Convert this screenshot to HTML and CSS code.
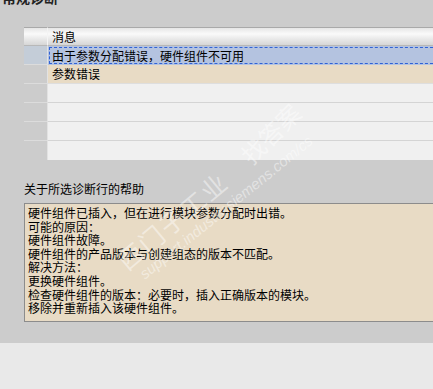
FILE: index.html
```html
<!DOCTYPE html>
<html lang="zh-CN">
<head>
    <meta charset="UTF-8">
    <meta name="viewport" content="width=device-width, initial-scale=1.0">
    <title>常规诊断</title>
    <link rel="stylesheet" href="styles.css">
</head>
<body>
    <div class="panel">
        <div class="title">常规诊断</div>
        <div class="grid">
            <div class="row head">
                <div class="stub"></div>
                <div class="cell">消息</div>
            </div>
            <div class="row selected">
                <div class="stub"></div>
                <div class="cell"><span class="focus">由于参数分配错误，硬件组件不可用</span></div>
            </div>
            <div class="row alt">
                <div class="stub"></div>
                <div class="cell">参数错误</div>
            </div>
            <div class="row">
                <div class="stub"></div>
                <div class="cell"></div>
            </div>
            <div class="row">
                <div class="stub"></div>
                <div class="cell"></div>
            </div>
            <div class="row">
                <div class="stub"></div>
                <div class="cell"></div>
            </div>
            <div class="row last">
                <div class="stub"></div>
                <div class="cell"></div>
            </div>
        </div>
        <div class="help-label">关于所选诊断行的帮助</div>
        <div class="help-box">
            <div>硬件组件已插入，但在进行模块参数分配时出错。</div>
            <div>可能的原因：</div>
            <div>硬件组件故障。</div>
            <div>硬件组件的产品版本与创建组态的版本不匹配。</div>
            <div>解决方法：</div>
            <div>更换硬件组件。</div>
            <div>检查硬件组件的版本：必要时，插入正确版本的模块。</div>
            <div>移除并重新插入该硬件组件。</div>
        </div>
    </div>

    <!-- watermark over the screenshot -->
    <div class="mark mark-cn" style="left: 172px; top: 220px;">西门子工业</div>
    <div class="mark mark-url" style="left: 226px; top: 207px;">support.industry.siemens.com/cs</div>
    <div class="mark mark-ask" style="left: 270px; top: 133px;">找答案</div>
</body>
</html>
```

FILE: styles.css
```css
body {
    margin: 0;
    background-color: #e9e9e9;
    font-family: "Noto Sans CJK SC", "Liberation Sans", sans-serif;
    font-size: 12px;
    color: #000;
    overflow: hidden;
    position: relative;
    height: 389px;
}
.panel {
    background-color: #cccccc;
    height: 343px;
    padding-left: 24px;
    box-sizing: border-box;
    overflow: hidden;
}
.title {
    height: 27px;
    margin-left: -22px;
    margin-top: -10px;
    font-size: 14px;
    font-weight: bold;
    line-height: 14px;
    color: #222;
    padding-bottom: 10px;
}
.grid {
    margin-right: -10px;
}
.row {
    display: flex;
    height: 19px;
}
.stub {
    width: 24px;
    background-color: #cccccc;
    border-bottom: 1px solid #dcdcdc;
    border-right: 1px solid #e2e2e2;
    box-sizing: border-box;
}
.cell {
    flex: 1;
    background-color: #f0f0f0;
    border-bottom: 1px solid #d4d4d4;
    box-sizing: border-box;
    padding-left: 4px;
    line-height: 18px;
}
.head .stub,
.head .cell {
    background: linear-gradient(#e6e6e6, #fafafa 35%, #eeeeee 55%, #d6d6d6);
    border-top: 1px solid #a9a9a9;
    border-bottom: 1px solid #b8b8b8;
    line-height: 17px;
}
.head .stub {
    border-right: 1px solid #f4f4f4;
}
.selected .stub {
    background-color: #c4cdd8;
}
.selected .cell {
    background-color: #b4c3e0;
    padding: 1px 0 1px 1px;
    border-bottom: none;
}
.focus {
    display: block;
    height: 17px;
    border: 1px dashed #2f62d6;
    border-right: none;
    box-sizing: border-box;
    padding-left: 2px;
    line-height: 15px;
}
.alt .cell {
    background-color: #e8dbc5;
    border-bottom: 1px solid #dedede;
}
.last .stub,
.last .cell {
    border-bottom: none;
}
.help-label {
    margin-top: 21px;
    line-height: 16px;
}
.help-box {
    margin-top: 6px;
    margin-right: -10px;
    height: 119px;
    box-sizing: border-box;
    border: 1px solid #8c8c8c;
    background-color: #e8dbc5;
    padding: 2px 0 0 3px;
    line-height: 13.6px;
}
.mark {
    position: absolute;
    white-space: nowrap;
    color: rgba(255, 255, 255, 0.45);
    pointer-events: none;
    transform: translate(-50%, -50%) rotate(-40deg);
}
.mark-cn {
    font-size: 25px;
    letter-spacing: 2px;
}
.mark-url {
    font-family: "Liberation Sans", sans-serif;
    font-size: 15px;
    font-style: italic;
    transform: translate(-50%, -50%) rotate(-39deg);
}
.mark-ask {
    font-size: 24px;
    transform: translate(-50%, -50%) rotate(-45deg);
}
```
